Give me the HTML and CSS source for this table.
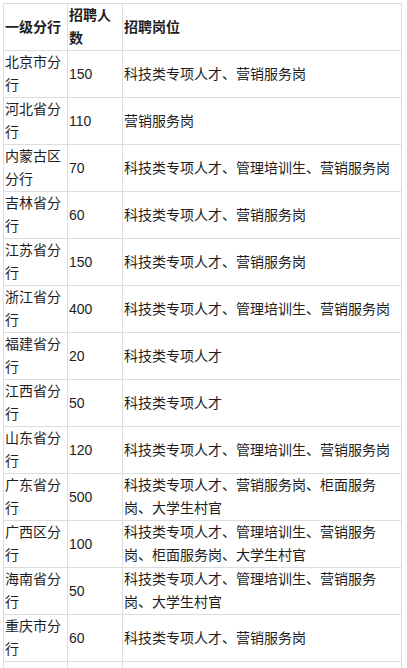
FILE: index.html
```html
<!DOCTYPE html>
<html lang="zh-CN">
<head>
<meta charset="utf-8">
<link rel="stylesheet" href="styles.css">
</head>
<body>
<table class="jobs">
  <colgroup>
    <col class="c1"><col class="c2"><col class="c3">
  </colgroup>
  <thead>
    <tr><th>一级分行</th><th>招聘人数</th><th>招聘岗位</th></tr>
  </thead>
  <tbody>
    <tr><td>北京市分行</td><td>150</td><td>科技类专项人才、营销服务岗</td></tr>
    <tr><td>河北省分行</td><td>110</td><td>营销服务岗</td></tr>
    <tr><td>内蒙古区分行</td><td>70</td><td>科技类专项人才、管理培训生、营销服务岗</td></tr>
    <tr><td>吉林省分行</td><td>60</td><td>科技类专项人才、营销服务岗</td></tr>
    <tr><td>江苏省分行</td><td>150</td><td>科技类专项人才、营销服务岗</td></tr>
    <tr><td>浙江省分行</td><td>400</td><td>科技类专项人才、管理培训生、营销服务岗</td></tr>
    <tr><td>福建省分行</td><td>20</td><td>科技类专项人才</td></tr>
    <tr><td>江西省分行</td><td>50</td><td>科技类专项人才</td></tr>
    <tr><td>山东省分行</td><td>120</td><td>科技类专项人才、管理培训生、营销服务岗</td></tr>
    <tr><td>广东省分行</td><td>500</td><td>科技类专项人才、营销服务岗、柜面服务岗、大学生村官</td></tr>
    <tr><td>广西区分行</td><td>100</td><td>科技类专项人才、管理培训生、营销服务岗、柜面服务岗、大学生村官</td></tr>
    <tr><td>海南省分行</td><td>50</td><td>科技类专项人才、管理培训生、营销服务岗、大学生村官</td></tr>
    <tr><td>重庆市分行</td><td>60</td><td>科技类专项人才、营销服务岗</td></tr>
    <tr class="tail"><td></td><td></td><td></td></tr>
  </tbody>
</table>
</body>
</html>
```
FILE: styles.css
```css
html, body {
  margin: 0;
  padding: 0;
  background: #ffffff;
}
body {
  padding: 3px 0 0 3px;
  font-family: "Liberation Sans", "Noto Sans CJK SC", sans-serif;
  font-size: 14px;
  color: #1e1e1e;
}
.jobs {
  border-collapse: collapse;
  table-layout: fixed;
  width: 398px;
}
.jobs .c1 { width: 64px; }
.jobs .c2 { width: 55px; }
.jobs .c3 { width: 279px; }
.jobs th,
.jobs td {
  border: 1px solid #dddddd;
  padding: 0 0 0 1px;
  line-height: 23px;
  height: 46px;
  vertical-align: middle;
  text-align: left;
  word-break: break-all;
}
.jobs th {
  font-weight: bold;
}
```
